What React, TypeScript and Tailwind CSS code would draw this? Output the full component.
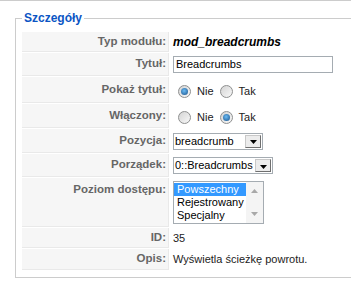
import clsx from 'clsx';

const keyCls =
  'w-[147px] bg-[#f6f6f6] border-r border-b border-[#e9e9e9] pr-[2px] text-right font-bold text-[#666] text-[11.5px] whitespace-nowrap';
const valCls = 'pl-[3px] text-[11px] text-[#222] whitespace-nowrap';

function Radio({ checked }: { checked?: boolean }) {
  return (
    <span className="inline-flex w-[13px] h-[13px] shrink-0 items-center justify-center rounded-full border border-[#8e8f8f] bg-[linear-gradient(135deg,#d4d4d4,#f8f8f8)]">
      {checked && (
        <span className="block w-[7px] h-[7px] rounded-full bg-[radial-gradient(circle_at_45%_40%,#6cbcf5,#164f88)]" />
      )}
    </span>
  );
}

function RadioPair({ yes }: { yes: boolean }) {
  return (
    <div className="flex items-center pt-[3px]">
      <span className="ml-[5px] flex">
        <Radio checked={!yes} />
      </span>
      <span className="ml-[6px]">Nie</span>
      <span className="ml-[6px] flex">
        <Radio checked={yes} />
      </span>
      <span className="ml-[6px]">Tak</span>
    </div>
  );
}

function Arrow({ up, color = '#000' }: { up?: boolean; color?: string }) {
  return (
    <svg width="7" height="4" viewBox="0 0 7 4">
      <path d={up ? 'M0 4h7L3.5 0z' : 'M0 0h7L3.5 4z'} fill={color} />
    </svg>
  );
}

function Select({ value, wide }: { value: string; wide?: boolean }) {
  return (
    <div
      className={clsx(
        'h-[17px] border border-[#a5acb2] bg-white flex items-center',
        wide ? 'w-[100px]' : 'w-[90px]'
      )}
    >
      <span className="flex-1 pl-[1px] leading-none overflow-hidden">{value}</span>
      <span className="w-[16px] h-[13px] mr-[1px] shrink-0 border border-t-[#c8c8c8] border-l-[#c8c8c8] border-r-[#6f6f6f] border-b-[#6f6f6f] bg-[#ececec] flex items-center justify-center pt-[2px]">
        <Arrow />
      </span>
    </div>
  );
}

function ListBox() {
  return (
    <div className="w-[91px] h-[43px] border border-[#a5acb2] bg-white flex">
      <div className="flex-1 py-[1px] leading-[13px]">
        <div className="bg-[#3399ff] text-white pl-[3px]">Powszechny</div>
        <div className="pl-[3px]">Rejestrowany</div>
        <div className="pl-[3px]">Specjalny</div>
      </div>
      <div className="w-[17px] bg-[#f4f4f4] flex flex-col justify-between items-center py-[7px]">
        <Arrow up color="#a8a8a8" />
        <Arrow color="#a8a8a8" />
      </div>
    </div>
  );
}

export default function App() {
  return (
    <div className="w-[351px] h-[289px] overflow-hidden bg-white border-t border-[#ccc] font-['Liberation_Sans',Arial,sans-serif]">
      <fieldset className="ml-[15px] mt-[10px] w-[420px] border border-[#ccc] pl-[5px] pt-[6px] pb-[6px]">
        <legend className="ml-[1px] px-[2px] text-[12px] leading-[14px] font-bold text-[#0B55C4]">
          Szczegóły
        </legend>
        <table className="w-full border-separate border-spacing-[1px]">
          <tbody>
            <tr className="h-[20px]">
              <td className={keyCls}>Typ modułu:</td>
              <td className={clsx(valCls, 'text-[12px] font-bold italic text-black')}>mod_breadcrumbs</td>
            </tr>
            <tr className="h-[23px]">
              <td className={keyCls}>Tytuł:</td>
              <td className={valCls}>
                <div className="w-[160px] h-[17px] border border-[#a5acb2] flex items-center pl-[2px] text-black">
                  Breadcrumbs
                </div>
              </td>
            </tr>
            <tr className="h-[26px]">
              <td className={keyCls}>Pokaż tytuł:</td>
              <td className={valCls}>
                <RadioPair yes={false} />
              </td>
            </tr>
            <tr className="h-[24px]">
              <td className={keyCls}>Włączony:</td>
              <td className={valCls}>
                <RadioPair yes />
              </td>
            </tr>
            <tr className="h-[24px]">
              <td className={keyCls}>Pozycja:</td>
              <td className={clsx(valCls, 'text-black')}>
                <Select value="breadcrumb" />
              </td>
            </tr>
            <tr className="h-[23px]">
              <td className={keyCls}>Porządek:</td>
              <td className={clsx(valCls, 'text-black')}>
                <Select value="0::Breadcrumbs" wide />
              </td>
            </tr>
            <tr className="h-[49px]">
              <td className={clsx(keyCls, 'align-top pt-[3px]')}>Poziom dostępu:</td>
              <td className={clsx(valCls, 'align-top pt-[3px] text-black')}>
                <ListBox />
              </td>
            </tr>
            <tr className="h-[20px]">
              <td className={keyCls}>ID:</td>
              <td className={valCls}>35</td>
            </tr>
            <tr className="h-[21px]">
              <td className={keyCls}>Opis:</td>
              <td className={valCls}>Wyświetla ścieżkę powrotu.</td>
            </tr>
          </tbody>
        </table>
      </fieldset>
    </div>
  );
}
